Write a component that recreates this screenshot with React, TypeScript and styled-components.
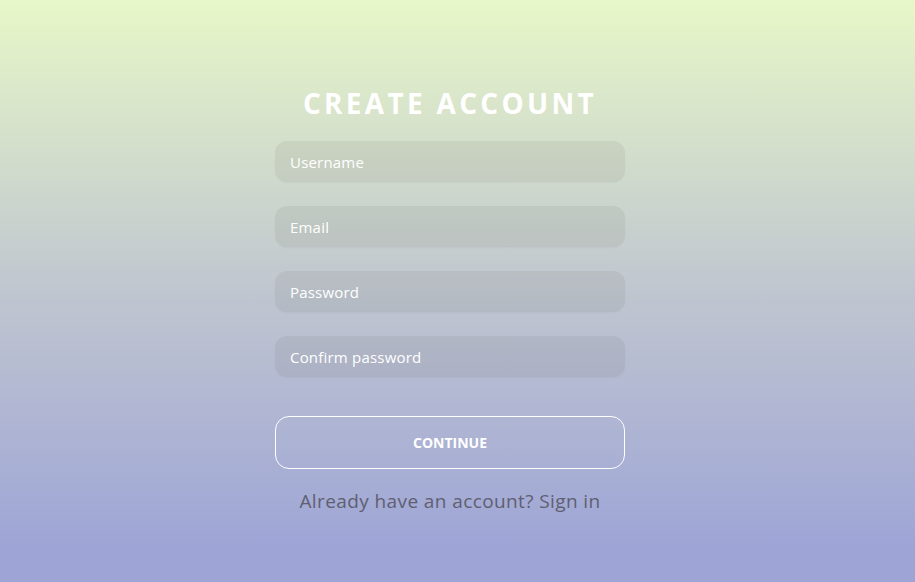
import React from "react";
import styled, { createGlobalStyle } from "styled-components";

const Global = createGlobalStyle`
  html, body { margin: 0; padding: 0; }
  body { font-family: "Open Sans", "Noto Sans", sans-serif; }
  * { box-sizing: border-box; }
`;

const Page = styled.div`
  width: 100%;
  height: 582px;
  padding-right: 15px;
  background: linear-gradient(180deg, #e8f7c8 0%, #c0c6cf 50%, #9ea5d6 94%, #9ea5d6 100%);
  display: flex;
  justify-content: center;
`;

const Form = styled.form`
  width: 350px;
  padding-top: 85px;
  display: flex;
  flex-direction: column;
  align-items: stretch;
`;

const Title = styled.h1`
  margin: 0 0 20px;
  text-align: center;
  color: #ffffff;
  font-family: "Open Sans", sans-serif;
  font-weight: 700;
  font-size: 28px;
  line-height: 36px;
  letter-spacing: 3.3px;
`;

const Fields = styled.div`
  display: flex;
  flex-direction: column;
  gap: 24px;
`;

const Input = styled.input`
  height: 41px;
  width: 100%;
  border: none;
  outline: none;
  border-radius: 12px;
  background: rgba(60, 60, 40, 0.07);
  box-shadow: 0 1px 2px rgba(0, 0, 0, 0.03);
  padding: 0 15px;
  font-family: "Open Sans", sans-serif;
  font-weight: 500;
  font-size: 15px;
  letter-spacing: 0.2px;
  color: #ffffff;
  &::placeholder { color: #ffffff; opacity: 1; }
`;

const Button = styled.button`
  margin-top: 39px;
  height: 53px;
  width: 100%;
  border: 1px solid #ffffff;
  border-radius: 14px;
  background: transparent;
  color: #ffffff;
  font-family: "Open Sans", sans-serif;
  font-weight: 700;
  font-size: 14px;
  cursor: pointer;
`;

const Footer = styled.p`
  margin: 18px 0 0;
  text-align: center;
  color: #5f5f72;
  font-family: "Open Sans", sans-serif;
  font-size: 19px;
  letter-spacing: 0.4px;
  line-height: 28px;
`;

export default function App() {
  return (
    <>
      <Global />
      <Page>
        <Form onSubmit={(e) => e.preventDefault()}>
          <Title>CREATE ACCOUNT</Title>
          <Fields>
            <Input placeholder="Username" />
            <Input placeholder="Email" type="email" />
            <Input placeholder="Password" type="password" />
            <Input placeholder="Confirm password" type="password" />
          </Fields>
          <Button type="submit">CONTINUE</Button>
          <Footer>Already have an account? Sign in</Footer>
        </Form>
      </Page>
    </>
  );
}
